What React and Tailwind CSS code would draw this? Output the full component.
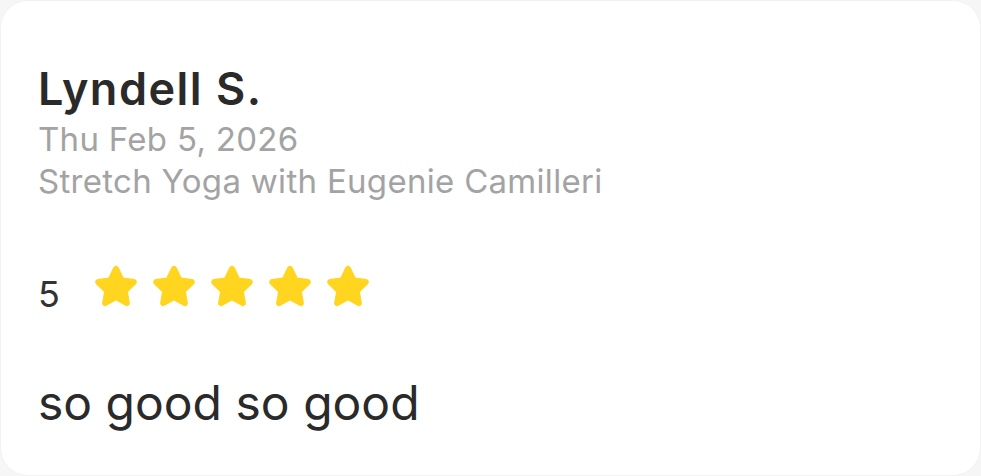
import React from 'react'

function Star() {
  return (
    <svg width="52" height="52" viewBox="0 0 24 24" className="shrink-0">
      <path
        d="M12 2.6c.4 0 .7.2.9.6l2.3 4.8 5.2.7c.8.1 1.1 1.1.5 1.7l-3.8 3.7.9 5.2c.1.8-.7 1.4-1.4 1l-4.6-2.5-4.6 2.5c-.7.4-1.6-.2-1.4-1l.9-5.2-3.8-3.7c-.6-.6-.3-1.6.5-1.7l5.2-.7 2.3-4.8c.2-.4.5-.6.9-.6z"
        fill="#FFD520"
        stroke="#FFD520"
        strokeWidth="0.8"
        strokeLinejoin="round"
      />
    </svg>
  )
}

export default function App() {
  return (
    <div className="w-[981px] h-[476px] bg-[#f6f6f6]" style={{ fontFamily: 'Inter, "Noto Sans", sans-serif' }}>
      <div className="w-full h-full bg-white rounded-[28px] border border-[#f2f2f2] px-[37px] pt-[61px]">
        <div className="text-[45px] leading-[54px] font-semibold text-[#2a2a2a] tracking-[1.5px]">Lyndell S.</div>
        <div className="mt-[2px] text-[33px] leading-[42px] text-[#a3a3a3] tracking-[0.3px]">Thu Feb 5, 2026</div>
        <div className="text-[33px] leading-[42px] text-[#a3a3a3] tracking-[0.3px]">Stretch Yoga with Eugenie Camilleri</div>
        <div className="flex items-start mt-[59px]">
          <span className="text-[36px] leading-[52px] mt-[7px] text-[#333] w-[52px]">5</span>
          <div className="flex gap-[6px]">
            <Star /><Star /><Star /><Star /><Star />
          </div>
        </div>
        <div className="mt-[54px] text-[48px] leading-[58px] text-[#2a2a2a]">so good so good</div>
      </div>
    </div>
  )
}
